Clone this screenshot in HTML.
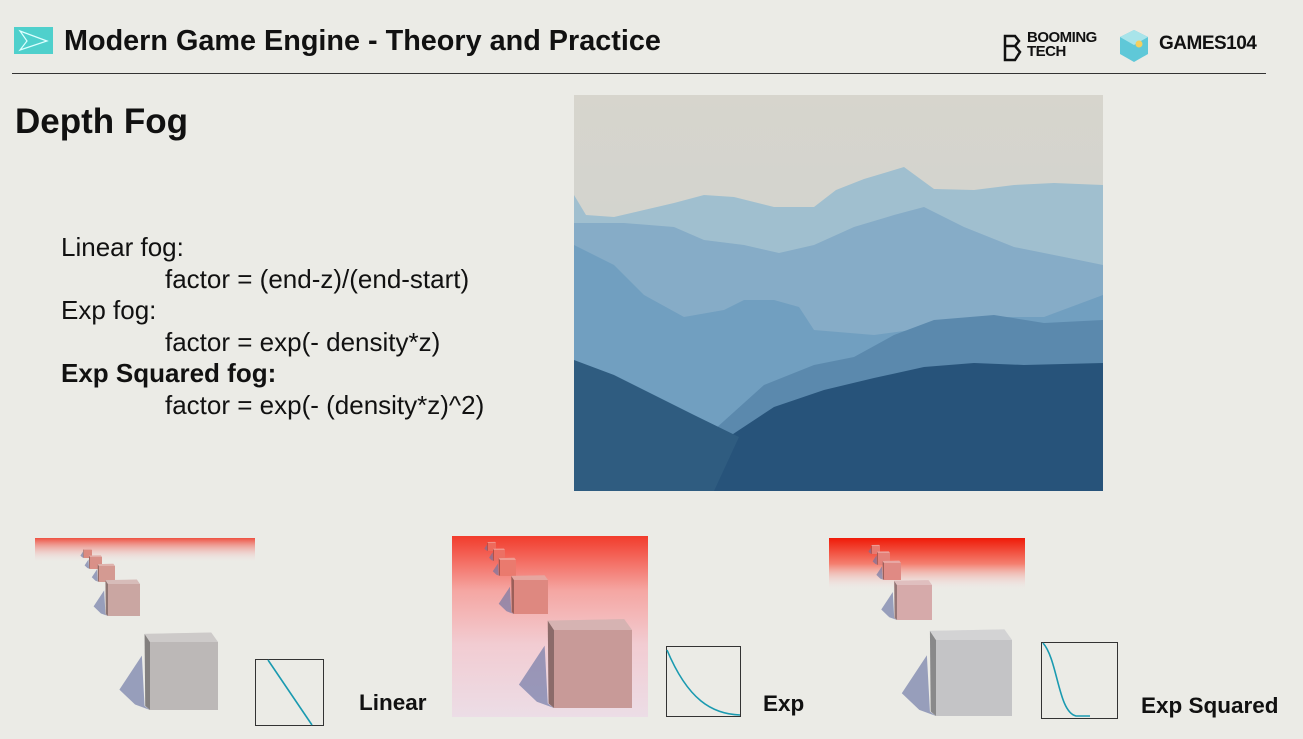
<!DOCTYPE html>
<html><head><meta charset="utf-8"><style>
html,body{margin:0;padding:0}
body{width:1303px;height:739px;background:#ebebe6;position:relative;overflow:hidden;font-family:"Liberation Sans",Arial,sans-serif;color:#111}
.a{position:absolute;white-space:nowrap}
</style></head><body>
<svg class="a" style="left:0;top:0" width="1303" height="739" viewBox="0 0 1303 739">
<defs>
<linearGradient id="sky" x1="0" y1="0" x2="0" y2="1"><stop offset="0" stop-color="#d7d5cd"/><stop offset=".6" stop-color="#cfd3cf"/><stop offset="1" stop-color="#b6cad2"/></linearGradient>
<linearGradient id="bar1" x1="0" y1="0" x2="0" y2="1"><stop offset="0" stop-color="#ee5040"/><stop offset="1" stop-color="#f4e0e4" stop-opacity="0"/></linearGradient>
<linearGradient id="bar3" x1="0" y1="0" x2="0" y2="1"><stop offset="0" stop-color="#ef1a08"/><stop offset=".5" stop-color="#f48070"/><stop offset="1" stop-color="#f4e6ea" stop-opacity="0"/></linearGradient>
<linearGradient id="p2" x1="0" y1="0" x2="0" y2="1"><stop offset="0" stop-color="#f23c2c"/><stop offset=".3" stop-color="#f5a6a2"/><stop offset=".6" stop-color="#f2ccd2"/><stop offset="1" stop-color="#ecdde6"/></linearGradient>
<g id="cube">
<polygon points="-45,70 -12,20 -8,94 0,100 -22,92" fill="#6a75a5" fill-opacity=".65"/>
<polygon points="-8,-12 0,0 0,100 -7,94"/>
<polygon points="-8,-12 0,0 0,100 -7,94" fill="#000" fill-opacity=".3"/>
<polygon points="-8,-12 90,-14 100,0 0,0"/>
<polygon points="-8,-12 90,-14 100,0 0,0" fill="#fff" fill-opacity=".25"/>
<rect x="0" y="0" width="100" height="100"/>
</g>
</defs>
<rect x="14" y="27" width="39" height="27" fill="#4fd0cc"/>
<polygon points="20,31 47,41 20,50 27,41" fill="none" stroke="#dff" stroke-width="1.2"/>
<line x1="12" y1="73.5" x2="1266" y2="73.5" stroke="#333" stroke-width="1"/>
<polygon points="1134,30 1148,37 1148,54 1134,62 1120,54 1120,37" fill="#5fc8d8"/>
<polygon points="1134,30 1148,37 1134,45 1120,37" fill="#a8e4ea"/>
<circle cx="1139" cy="44" r="3.5" fill="#f4d060"/>
<path d="M1005,36 h10 l4,5 l-4,5 l5,6 l-5,8 h-10 z M1005,46 h10" fill="none" stroke="#111" stroke-width="2.5"/>
<g transform="translate(574,95)">
<rect width="529" height="396" fill="url(#sky)"/>
<path d="M0,100 L12,120 40,122 70,115 100,108 130,100 160,102 200,112 240,112 262,95 290,84 330,72 360,94 400,95 440,90 480,88 529,90 L529,396 L0,396 Z" fill="#a0bfcf"/>
<path d="M0,128 L50,128 100,132 130,145 170,150 205,158 240,150 280,132 320,120 350,112 390,132 440,152 490,162 529,170 L529,396 L0,396 Z" fill="#86acc7"/>
<path d="M0,150 L40,170 70,200 110,222 150,215 170,205 200,205 225,212 240,235 300,240 360,232 420,222 470,222 529,200 L529,396 L0,396 Z" fill="#719fc0"/>
<path d="M140,335 L190,290 240,270 280,262 320,240 360,225 420,220 470,228 529,225 L529,396 L140,396 Z" fill="#5b89ad"/>
<path d="M150,345 L200,312 250,295 300,283 350,272 400,268 450,270 529,268 L529,396 L110,396 Z" fill="#27537a"/>
<path d="M0,265 L40,280 80,300 120,320 165,342 140,396 0,396 Z" fill="#2f5c80"/>
</g>
<rect x="35" y="538" width="220" height="24" fill="url(#bar1)"/>
<use href="#cube" transform="translate(84,550) scale(.08)" fill="#dc8a80"/>
<use href="#cube" transform="translate(90,557) scale(.12)" fill="#d99088"/>
<use href="#cube" transform="translate(99,566) scale(.16)" fill="#d49a92"/>
<use href="#cube" transform="translate(108,584) scale(.32)" fill="#caa6a2"/>
<use href="#cube" transform="translate(150,642) scale(.68)" fill="#bcb8b7"/>
<rect x="255.5" y="659.5" width="68" height="66" fill="none" stroke="#333"/>
<line x1="268" y1="660" x2="312" y2="725" stroke="#1a9ab0" stroke-width="1.6"/>
<rect x="452" y="536" width="196" height="181" fill="url(#p2)"/>
<use href="#cube" transform="translate(488,543) scale(.08)" fill="#ee6a5c"/>
<use href="#cube" transform="translate(494,550) scale(.11)" fill="#ec7064"/>
<use href="#cube" transform="translate(500,560) scale(.16)" fill="#ea7a6e"/>
<use href="#cube" transform="translate(514,580) scale(.34)" fill="#de8880"/>
<use href="#cube" transform="translate(554,630) scale(.78)" fill="#c89a98"/>
<rect x="666.5" y="646.5" width="74" height="70" fill="none" stroke="#333"/>
<path d="M667,650 C688,700 712,714 740,715" fill="none" stroke="#1a9ab0" stroke-width="1.6"/>
<rect x="829" y="538" width="196" height="52" fill="url(#bar3)"/>
<use href="#cube" transform="translate(872,546) scale(.08)" fill="#e87a70"/>
<use href="#cube" transform="translate(878,553) scale(.12)" fill="#e4827a"/>
<use href="#cube" transform="translate(884,563) scale(.17)" fill="#e08a84"/>
<use href="#cube" transform="translate(897,585) scale(.35)" fill="#d6aaaa"/>
<use href="#cube" transform="translate(936,640) scale(.76)" fill="#c4c4c6"/>
<rect x="1041.5" y="642.5" width="76" height="76" fill="none" stroke="#333"/>
<path d="M1043,643 C1058,660 1058,712 1076,716 L1090,716" fill="none" stroke="#1a9ab0" stroke-width="1.6"/>
</svg>
<div class="a" style="left:64px;top:25px;font-size:28.8px;font-weight:bold">Modern Game Engine - Theory and Practice</div>
<div class="a" style="left:1027px;top:31px;font-size:15px;font-weight:bold;line-height:14px;letter-spacing:-0.5px">BOOMING<br>TECH</div>
<div class="a" style="left:1159px;top:33px;font-size:19px;font-weight:bold;letter-spacing:-0.5px">GAMES104</div>
<div class="a" style="left:15px;top:102px;font-size:35px;font-weight:bold">Depth Fog</div>
<div class="a" style="left:61px;top:232px;font-size:26px;line-height:31.5px">Linear fog:<br><span style="padding-left:104px">factor = (end-z)/(end-start)</span><br>Exp fog:<br><span style="padding-left:104px">factor = exp(- density*z)</span><br><b>Exp Squared fog:</b><br><span style="padding-left:104px">factor = exp(- (density*z)^2)</span></div>
<div class="a" style="left:359px;top:690px;font-size:22.5px;font-weight:bold">Linear</div>
<div class="a" style="left:763px;top:691px;font-size:22.5px;font-weight:bold">Exp</div>
<div class="a" style="left:1141px;top:693px;font-size:22.5px;font-weight:bold">Exp Squared</div>
</body></html>
